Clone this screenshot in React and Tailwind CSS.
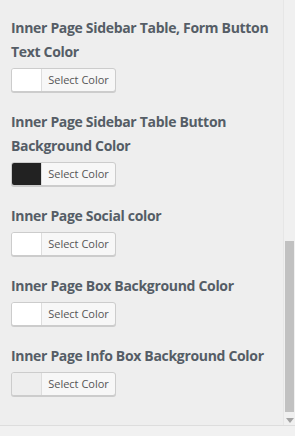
export default function App() {
  const items = [
    { title: "Inner Page Sidebar Table, Form Button Text Color", color: "#ffffff" },
    { title: "Inner Page Sidebar Table Button Background Color", color: "#222222" },
    { title: "Inner Page Social color", color: "#ffffff" },
    { title: "Inner Page Box Background Color", color: "#ffffff" },
    { title: "Inner Page Info Box Background Color", color: "#eeeeee" },
  ];
  return (
    <div className="w-[295px] h-[436px] bg-[#eeeeee] flex flex-col overflow-hidden" style={{ fontFamily: '"Open Sans", "Noto Sans", sans-serif' }}>
      <div className="flex flex-1 min-h-0">
        <div className="flex-1 pt-[16px] pl-[11px] pr-[8px] flex flex-col gap-[18px]">
          {items.map((it, i) => (
            <div key={i} className="flex flex-col gap-[4px]">
              <div className="text-[14px] leading-[24px] font-bold text-[#555d66] tracking-[-0.32px]">{it.title}</div>
              <div className="flex w-[105px] h-[24px] rounded-[3px] border border-[#cccccc] bg-[#f7f7f7] shadow-[0_1px_0_#cccccc] overflow-hidden">
                <div className="w-[30px] h-full border-r border-[#dddddd]" style={{ backgroundColor: it.color }} />
                <div className="flex-1 flex items-center justify-center text-[11px] text-[#555555]">Select Color</div>
              </div>
            </div>
          ))}
        </div>
        <div className="w-[12px] border-l border-[#e6e6e6] bg-[#f0f0f0] flex flex-col">
          <div className="h-[241px]" />
          <div className="ml-[1px] w-[9px] h-[171px] bg-[#c1c1c1]" />
          <div className="flex justify-center pt-[6px]">
            <svg width="8" height="5" viewBox="0 0 8 5"><polygon points="0,0 8,0 4,5" fill="#a3a3a3" /></svg>
          </div>
        </div>
      </div>
      <div className="h-[11px] border-t border-[#dddddd] bg-[#f1f1f1]" />
    </div>
  );
}
